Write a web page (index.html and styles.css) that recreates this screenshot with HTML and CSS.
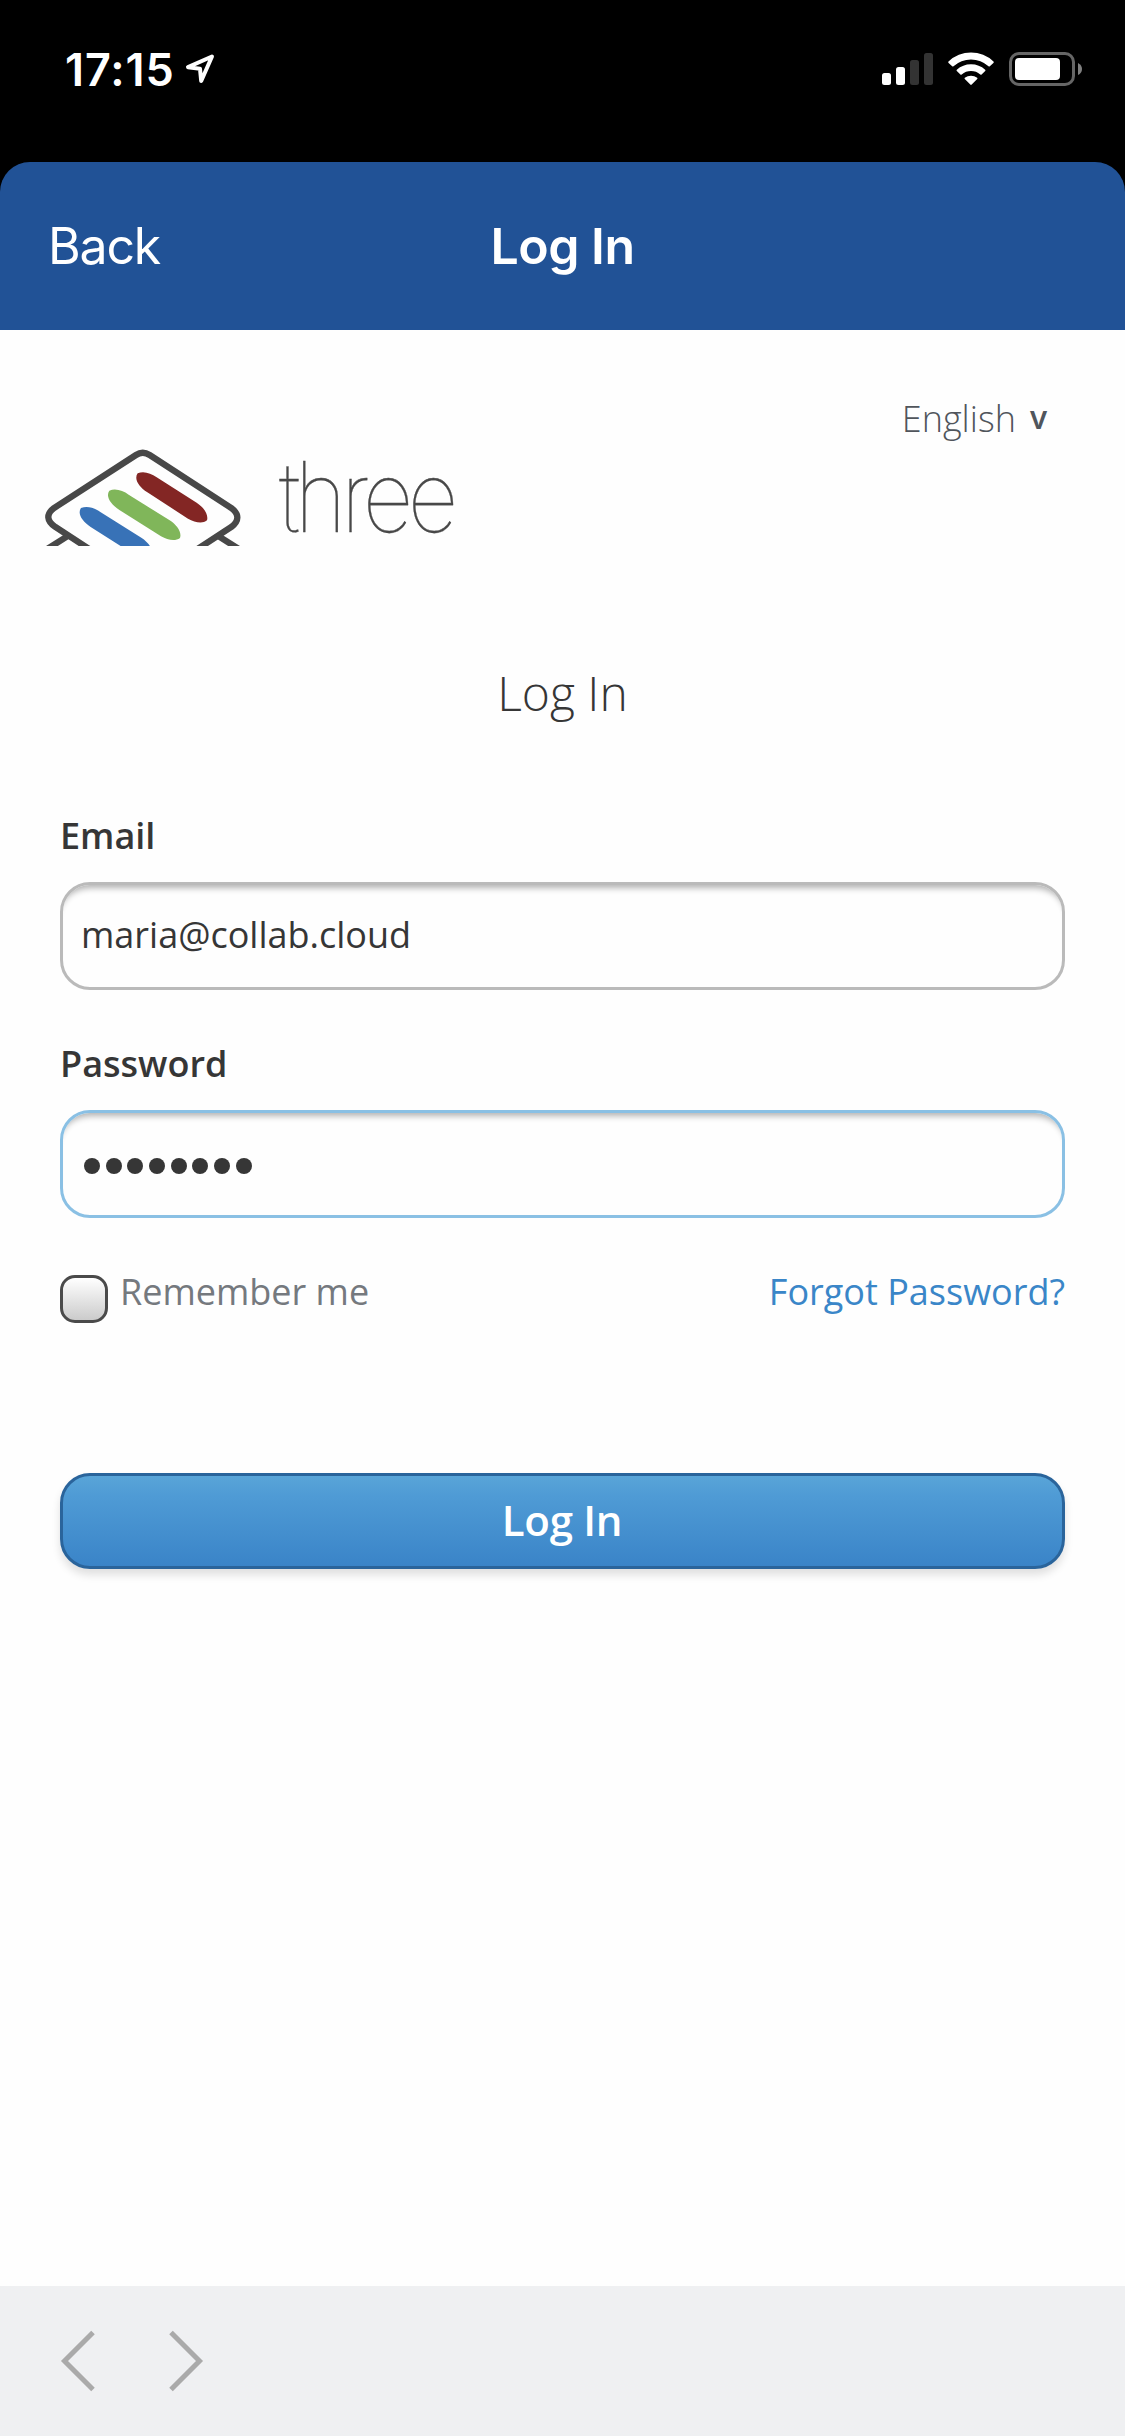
FILE: index.html
```html
<!DOCTYPE html>
<html lang="en">
<head>
<meta charset="utf-8">
<title>Log In</title>
<link rel="stylesheet" href="styles.css">
</head>
<body>
<div class="screen">
  <div class="status-bar">
    <span class="time">17:15</span>
    <svg class="location" width="32" height="32" viewBox="0 0 32 32"><path d="M28 3.500 4 14.200 16 15.700 17.200 28z"/></svg>
    <svg class="indicators" width="204" height="36" viewBox="0 0 204 36">
      <rect x="2" y="22" width="9" height="12" rx="2.500" fill="#fff"/>
      <rect x="16" y="16" width="9" height="18" rx="2.500" fill="#fff"/>
      <rect x="30" y="9" width="9" height="25" rx="2.500" fill="#333"/>
      <rect x="44" y="2" width="9" height="32" rx="2.500" fill="#333"/>
      <g transform="translate(91 0)" fill="#fff">
        <path d="M-22.500 10.500A32.500 32.500 0 0 1 22.500 10.500Q23 11.200 22.400 11.900L18.800 15.300Q18.200 15.700 17.500 15.200A26 26 0 0 0-17.500 15.200Q-18.200 15.700-18.800 15.300L-22.400 11.900Q-23 11.200-22.500 10.500Z"/>
        <path d="M-14.200 18.700A21 21 0 0 1 14.200 18.700Q14.800 19.400 14.200 20L10.600 23.600Q10 24 9.300 23.500A14.500 14.500 0 0 0-9.300 23.500Q-10 24-10.600 23.600L-14.200 20Q-14.800 19.400-14.200 18.700Z"/>
        <path d="M-6.200 26.800A10 10 0 0 1 6.200 26.800Q6.800 27.500 6.200 28.100L.7 33.600Q0 34.200-.7 33.600L-6.200 28.100Q-6.800 27.500-6.200 26.800Z"/>
      </g>
      <rect x="130.500" y="2.500" width="63" height="31" rx="8.500" fill="none" stroke="#666" stroke-width="3"/>
      <rect x="135" y="7" width="45" height="22" rx="4" fill="#fff"/>
      <path d="M198 12Q202 14 202 18T198 24z" fill="#808080"/>
    </svg>
  </div>

  <header class="nav">
    <span class="nav-back">Back</span>
    <span class="nav-title">Log In</span>
  </header>

  <main class="content">
    <div class="brand-row">
      <svg class="logo" width="220" height="116" viewBox="0 0 660 348">
        <g fill="none" stroke="#484848" stroke-width="19">
          <path d="M318 75Q338 62 359 75L604 234Q640 262 604 291L340 463 76 291Q36 262 72 234Z"/>
          <path d="M115 317 50 358M563 317 628 358"/>
        </g>
        <g>
          <path d="M323 130C342 122 362 130 380 142L500 218C522 232 536 254 531 271C517 283 494 277 474 266L352 187C326 169 311 147 323 130Z" fill="#832624"/>
          <path d="M238 182C257 174 279 182 296 194L419 271C441 285 456 307 450 324C435 335 413 330 393 319L267 239C242 222 226 199 238 182Z" fill="#80b65a"/>
          <path d="M153 234C172 226 194 234 211 246L334 323C356 337 371 359 365 376C350 387 328 382 308 371L182 291C157 274 141 251 153 234Z" fill="#3872b7"/>
        </g>
      </svg>
      <svg class="logo-name" width="300" height="160" viewBox="0 0 300 160">
        <text x="29" y="122" textLength="174" lengthAdjust="spacingAndGlyphs">three</text>
      </svg>
      <div class="language"><span>English</span><span class="language-arrow">v</span></div>
    </div>

    <h1 class="title">Log In</h1>

    <div class="form">
      <div class="label">Email</div>
      <div class="field"><span class="field-text">maria@collab.cloud</span></div>
      <div class="label">Password</div>
      <div class="field field-focus">
        <div class="dots"><i></i><i></i><i></i><i></i><i></i><i></i><i></i><i></i></div>
      </div>
      <div class="options">
        <span class="checkbox"></span>
        <span class="remember">Remember me</span>
        <a class="forgot">Forgot Password?</a>
      </div>
      <div class="submit"><span class="submit-text">Log In</span></div>
    </div>
  </main>

  <footer class="toolbar">
    <svg width="36" height="64" viewBox="0 0 36 64"><path d="M33 3.500 4.500 32 33 60.500"/></svg>
    <svg width="36" height="64" viewBox="0 0 36 64"><path d="M3 3.500 31.500 32 3 60.500"/></svg>
  </footer>
</div>
</body>
</html>
```
FILE: styles.css
```css
* { box-sizing: border-box; }
body { margin: 0; background: #000; }
.screen {
  width: 1125px;
  height: 2436px;
  display: flex;
  flex-direction: column;
  overflow: hidden;
  font-family: "Open Sans", sans-serif;
  color: #363636;
}
.status-bar {
  height: 138px;
  margin-bottom: 24px;
  padding: 0 41px 0 65px;
  display: flex;
  align-items: center;
}
.time {
  font: 600 45px Inter, sans-serif;
  letter-spacing: 0.9px;
  width: 119px;
  color: #fff;
}
.location { fill: none; stroke: #fff; stroke-width: 4; stroke-linejoin: round; }
.indicators { margin-left: auto; }
.nav {
  height: 168px;
  padding: 0 48px;
  display: grid;
  grid-template-columns: 1fr auto 1fr;
  align-items: center;
  background: #215296;
  border-radius: 30px 30px 0 0;
  font-family: Inter, sans-serif;
  font-size: 50px;
  color: #fff;
}
.nav-back { letter-spacing: -1.2px; }
.nav-title { font-weight: 600; letter-spacing: -0.5px; }
.content { flex: 1; background: #fefefe; }
.brand-row { display: flex; height: 216px; align-items: flex-start; }
.logo { display: block; margin: 100px 0 0 30px; }
.logo-name {
  margin-top: 80px;
  font: 100 97px Inter, sans-serif;
  letter-spacing: -6px;
  fill: #484848;
  stroke: #484848;
  stroke-width: 0.3;
}
.language {
  display: flex;
  gap: 14px;
  margin: 65px 78px 0 auto;
  font-size: 36px;
  font-weight: 300;
  line-height: 48px;
  color: #50555c;
}
.language-arrow { font-size: 32px; font-weight: 600; line-height: 44px; }
.title {
  margin: 117px 0 89px;
  font-size: 48px;
  font-weight: 300;
  line-height: 60px;
  text-align: center;
}
.form { padding: 0 60px; }
.label { font-size: 36px; font-weight: 600; line-height: 48px; }
.field {
  height: 108px;
  margin: 22px 0 50px;
  padding: 0 18px;
  display: flex;
  align-items: center;
  border: 3px solid #bababa;
  border-radius: 30px;
  background: #fefefe;
  box-shadow: inset 0 9px 6px -6px rgba(0, 0, 0, .3);
  font-size: 36px;
}
.field-text { line-height: 48px; padding-bottom: 2px; }
.field-focus { border-color: #8ac0e4; }
.dots { display: flex; gap: 5.700px; padding: 0 0 0 3px; }
.dots i { width: 16px; height: 16px; margin-top: 4px; border-radius: 50%; background: #363636; }
.options { display: flex; height: 56px; font-size: 36px; line-height: 48px; }
.checkbox {
  width: 48px;
  height: 48px;
  margin: 7px 12px 0 0;
  border: 3px solid #4a4a4a;
  border-radius: 15px;
  background: linear-gradient(#fff, #cbcbcb);
}
.remember { color: #75797e; }
.forgot { margin-left: auto; color: #3a86c8; }
.submit {
  height: 96px;
  margin-top: 149px;
  display: flex;
  align-items: center;
  justify-content: center;
  border: 3px solid #2a649b;
  border-radius: 30px;
  background: linear-gradient(#59a5d8, #4f9bd5 22%, #3a84c8);
  box-shadow: 0 6px 9px rgba(0, 0, 0, .12);
  font-size: 42px;
  font-weight: 600;
  letter-spacing: -0.3px;
  color: #fff;
}
.submit-text { line-height: 60px; padding: 0 1px 3px 0; }
.toolbar {
  height: 150px;
  padding: 43px 60px;
  display: flex;
  gap: 72px;
  background: #eff0f2;
}
.toolbar svg { fill: none; stroke: #aaa; stroke-width: 5; }
```
